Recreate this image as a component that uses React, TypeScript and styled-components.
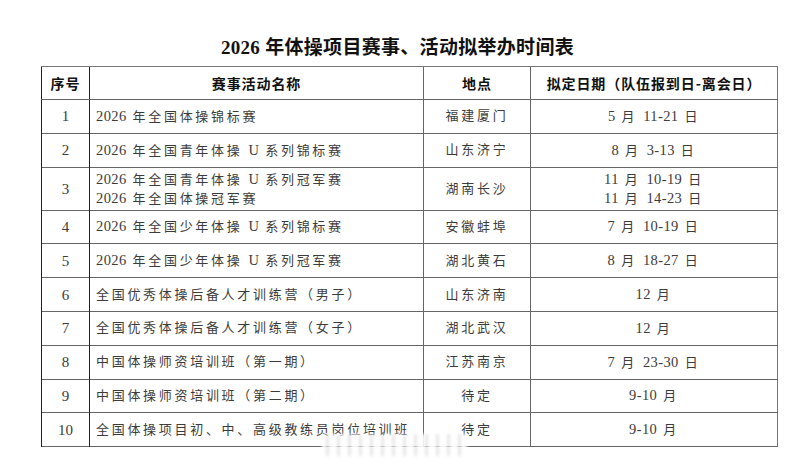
import { createGlobalStyle, styled } from 'styled-components';

interface EventRow {
  no: string;
  names: string[];
  place: string;
  dates: string[];
}

const rows: EventRow[] = [
  { no: '1', names: ['2026 年全国体操锦标赛'], place: '福建厦门', dates: ['5 月 11-21 日'] },
  { no: '2', names: ['2026 年全国青年体操 U 系列锦标赛'], place: '山东济宁', dates: ['8 月 3-13 日'] },
  {
    no: '3',
    names: ['2026 年全国青年体操 U 系列冠军赛', '2026 年全国体操冠军赛'],
    place: '湖南长沙',
    dates: ['11 月 10-19 日', '11 月 14-23 日'],
  },
  { no: '4', names: ['2026 年全国少年体操 U 系列锦标赛'], place: '安徽蚌埠', dates: ['7 月 10-19 日'] },
  { no: '5', names: ['2026 年全国少年体操 U 系列冠军赛'], place: '湖北黄石', dates: ['8 月 18-27 日'] },
  { no: '6', names: ['全国优秀体操后备人才训练营（男子）'], place: '山东济南', dates: ['12 月'] },
  { no: '7', names: ['全国优秀体操后备人才训练营（女子）'], place: '湖北武汉', dates: ['12 月'] },
  { no: '8', names: ['中国体操师资培训班（第一期）'], place: '江苏南京', dates: ['7 月 23-30 日'] },
  { no: '9', names: ['中国体操师资培训班（第二期）'], place: '待定', dates: ['9-10 月'] },
  { no: '10', names: ['全国体操项目初、中、高级教练员岗位培训班'], place: '待定', dates: ['9-10 月'] },
];

const GlobalStyle = createGlobalStyle`
  html, body {
    margin: 0;
    padding: 0;
    background: #fff;
  }
`;

const Page = styled.div`
  position: relative;
  width: 800px;
  height: 467px;
  padding-top: 37px;
  box-sizing: border-box;
  overflow: hidden;
  font-family: "Liberation Serif", "Noto Sans CJK SC", serif;
`;

const Title = styled.h1`
  margin: 0 0 7px;
  height: 22px;
  line-height: 22px;
  text-align: center;
  padding-right: 5px;
  font-size: 19px;
  font-weight: 700;
  color: #111;
  letter-spacing: 0.3px;
`;

const Table = styled.table`
  margin-left: 41px;
  width: 736px;
  table-layout: fixed;
  border-collapse: collapse;
  border-right: 1px solid #777;
  border-bottom: 1.5px solid #666;
`;

const HeadCell = styled.th<{ $strong?: boolean }>`
  height: 32px;
  padding: 0;
  border-top: 1.5px solid #777;
  border-bottom: 1.5px solid #666;
  border-left: ${({ $strong }) => ($strong ? '1.5px solid #222' : '1px solid #666')};
  font-family: "Noto Sans CJK SC", sans-serif;
  font-size: 14px;
  font-weight: 700;
  color: #111;
  letter-spacing: 0.9px;
  text-align: center;
  vertical-align: middle;
`;

const Row = styled.tr<{ $tall?: boolean }>`
  height: ${({ $tall }) => ($tall ? '43px' : '33.8px')};
`;

const Cell = styled.td<{ $align?: 'left' | 'center'; $strong?: boolean }>`
  padding: 0 0 0 ${({ $align }) => ($align === 'left' ? '6px' : '0')};
  border-top: 1px solid #666;
  border-left: ${({ $strong }) => ($strong ? '1.5px solid #222' : '1px solid #666')};
  font-size: 13px;
  font-weight: 400;
  line-height: 18px;
  color: #3c3c3c;
  letter-spacing: 2.7px;
  text-align: ${({ $align }) => $align ?? 'center'};
  vertical-align: middle;
  white-space: nowrap;
  overflow: hidden;
`;

const NoCell = styled(Cell)`
  font-size: 15px;
  letter-spacing: 0;
`;

const Line = styled.div`
  display: block;
`;

// latin digits in the document are set tighter and a bit bigger than the CJK
const Latin = styled.span`
  font-family: "Liberation Serif", serif;
  font-size: 14.5px;
  letter-spacing: 0.4px;
`;

const Mixed = ({ text }: { text: string }) => (
  <>
    {text.split(/([0-9A-Za-z\-]+)/).map((part, i) =>
      /^[0-9A-Za-z\-]+$/.test(part) ? <Latin key={i}>{part}</Latin> : part
    )}
  </>
);

const Watermark = styled.div`
  position: absolute;
  left: 322px;
  top: 434px;
  width: 145px;
  height: 22px;
  background: repeating-linear-gradient(
    90deg,
    rgba(255, 255, 255, 0.95) 0 4px,
    rgba(215, 215, 215, 0.6) 4px 7px,
    rgba(255, 255, 255, 0.9) 7px 11px
  );
  filter: blur(1.8px);
`;

const App = () => (
  <Page>
    <GlobalStyle />
    <Title>2026 年体操项目赛事、活动拟举办时间表</Title>
    <Table>
      <colgroup>
        <col style={{ width: 48 }} />
        <col style={{ width: 334 }} />
        <col style={{ width: 107 }} />
        <col style={{ width: 247 }} />
      </colgroup>
      <thead>
        <tr>
          <HeadCell $strong>序号</HeadCell>
          <HeadCell $strong>赛事活动名称</HeadCell>
          <HeadCell>地点</HeadCell>
          <HeadCell>拟定日期（队伍报到日-离会日）</HeadCell>
        </tr>
      </thead>
      <tbody>
        {rows.map((row) => (
          <Row key={row.no} $tall={row.names.length > 1}>
            <NoCell $strong>{row.no}</NoCell>
            <Cell $strong $align="left">
              {row.names.map((n) => (
                <Line key={n}>
                  <Mixed text={n} />
                </Line>
              ))}
            </Cell>
            <Cell>{row.place}</Cell>
            <Cell>
              {row.dates.map((d) => (
                <Line key={d}>
                  <Mixed text={d} />
                </Line>
              ))}
            </Cell>
          </Row>
        ))}
      </tbody>
    </Table>
    <Watermark />
  </Page>
);

export default App;
